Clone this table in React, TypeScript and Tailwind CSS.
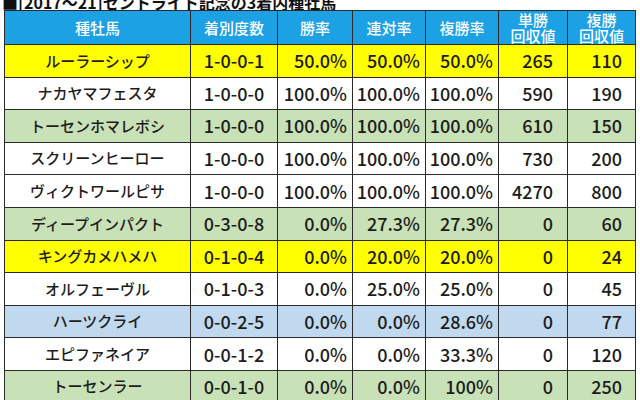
import React from 'react';

type Row = {
  name: string;
  record: string;
  win: string;
  quinella: string;
  place: string;
  winReturn: string;
  placeReturn: string;
  tone: 'yellow' | 'white' | 'green' | 'blue';
};

const ROWS: Row[] = [
  { name: 'ルーラーシップ', record: '1-0-0-1', win: '50.0%', quinella: '50.0%', place: '50.0%', winReturn: '265', placeReturn: '110', tone: 'yellow' },
  { name: 'ナカヤマフェスタ', record: '1-0-0-0', win: '100.0%', quinella: '100.0%', place: '100.0%', winReturn: '590', placeReturn: '190', tone: 'white' },
  { name: 'トーセンホマレボシ', record: '1-0-0-0', win: '100.0%', quinella: '100.0%', place: '100.0%', winReturn: '610', placeReturn: '150', tone: 'green' },
  { name: 'スクリーンヒーロー', record: '1-0-0-0', win: '100.0%', quinella: '100.0%', place: '100.0%', winReturn: '730', placeReturn: '200', tone: 'white' },
  { name: 'ヴィクトワールピサ', record: '1-0-0-0', win: '100.0%', quinella: '100.0%', place: '100.0%', winReturn: '4270', placeReturn: '800', tone: 'white' },
  { name: 'ディープインパクト', record: '0-3-0-8', win: '0.0%', quinella: '27.3%', place: '27.3%', winReturn: '0', placeReturn: '60', tone: 'green' },
  { name: 'キングカメハメハ', record: '0-1-0-4', win: '0.0%', quinella: '20.0%', place: '20.0%', winReturn: '0', placeReturn: '24', tone: 'yellow' },
  { name: 'オルフェーヴル', record: '0-1-0-3', win: '0.0%', quinella: '25.0%', place: '25.0%', winReturn: '0', placeReturn: '45', tone: 'white' },
  { name: 'ハーツクライ', record: '0-0-2-5', win: '0.0%', quinella: '0.0%', place: '28.6%', winReturn: '0', placeReturn: '77', tone: 'blue' },
  { name: 'エピファネイア', record: '0-0-1-2', win: '0.0%', quinella: '0.0%', place: '33.3%', winReturn: '0', placeReturn: '120', tone: 'white' },
  { name: 'トーセンラー', record: '0-0-1-0', win: '0.0%', quinella: '0.0%', place: '100%', winReturn: '0', placeReturn: '250', tone: 'green' },
];

const TONES: Record<Row['tone'], string> = {
  yellow: 'bg-[#ffff00]',
  white: 'bg-white',
  green: 'bg-[#c8e1b6]',
  blue: 'bg-[#c0d9ef]',
};

const th = 'border border-[#2a2a2a] font-medium text-[15px] text-white text-center leading-[16px]';
const td = 'border border-[#2a2a2a] text-[#1c1c1c] font-medium';

export default function App() {
  return (
    <div
      className="w-[640px] h-[400px] overflow-hidden bg-white"
      style={{ fontFamily: '"Noto Sans CJK JP", "Noto Sans", sans-serif' }}
    >
      {/* title, cut off at the top of the shot */}
      <div className="h-[10px] overflow-hidden">
        <div className="pl-[2px] mt-[-6px] text-[16px] leading-none font-bold text-[#111] whitespace-nowrap">
          ■[2017～21]セントライト記念の3着内種牡馬
        </div>
      </div>

      <table className="ml-[4px] w-[631px] table-fixed border-collapse">
        <colgroup>
          <col className="w-[186px]" />
          <col className="w-[87px]" />
          <col className="w-[75px]" />
          <col className="w-[73px]" />
          <col className="w-[73px]" />
          <col className="w-[69px]" />
          <col className="w-[68px]" />
        </colgroup>
        <thead>
          <tr className="h-[34px] bg-[#1ca1e4]">
            <th className={th}>種牡馬</th>
            <th className={th}>着別度数</th>
            <th className={th}>勝率</th>
            <th className={th}>連対率</th>
            <th className={th}>複勝率</th>
            <th className={`${th} text-[14px]`}>単勝<br />回収値</th>
            <th className={`${th} text-[14px]`}>複勝<br />回収値</th>
          </tr>
        </thead>
        <tbody>
          {ROWS.map((r) => (
            <tr key={r.name} className={`h-[32.6px] ${TONES[r.tone]}`}>
              <td className={`${td} text-center text-[15px]`}>{r.name}</td>
              <td className={`${td} text-center text-[18px]`}>{r.record}</td>
              <td className={`${td} text-right pr-[5px] text-[18px]`}>{r.win}</td>
              <td className={`${td} text-right pr-[5px] text-[18px]`}>{r.quinella}</td>
              <td className={`${td} text-right pr-[5px] text-[18px]`}>{r.place}</td>
              <td className={`${td} text-right pr-[14px] text-[18px]`}>{r.winReturn}</td>
              <td className={`${td} text-right pr-[13px] text-[18px]`}>{r.placeReturn}</td>
            </tr>
          ))}
        </tbody>
      </table>
    </div>
  );
}
